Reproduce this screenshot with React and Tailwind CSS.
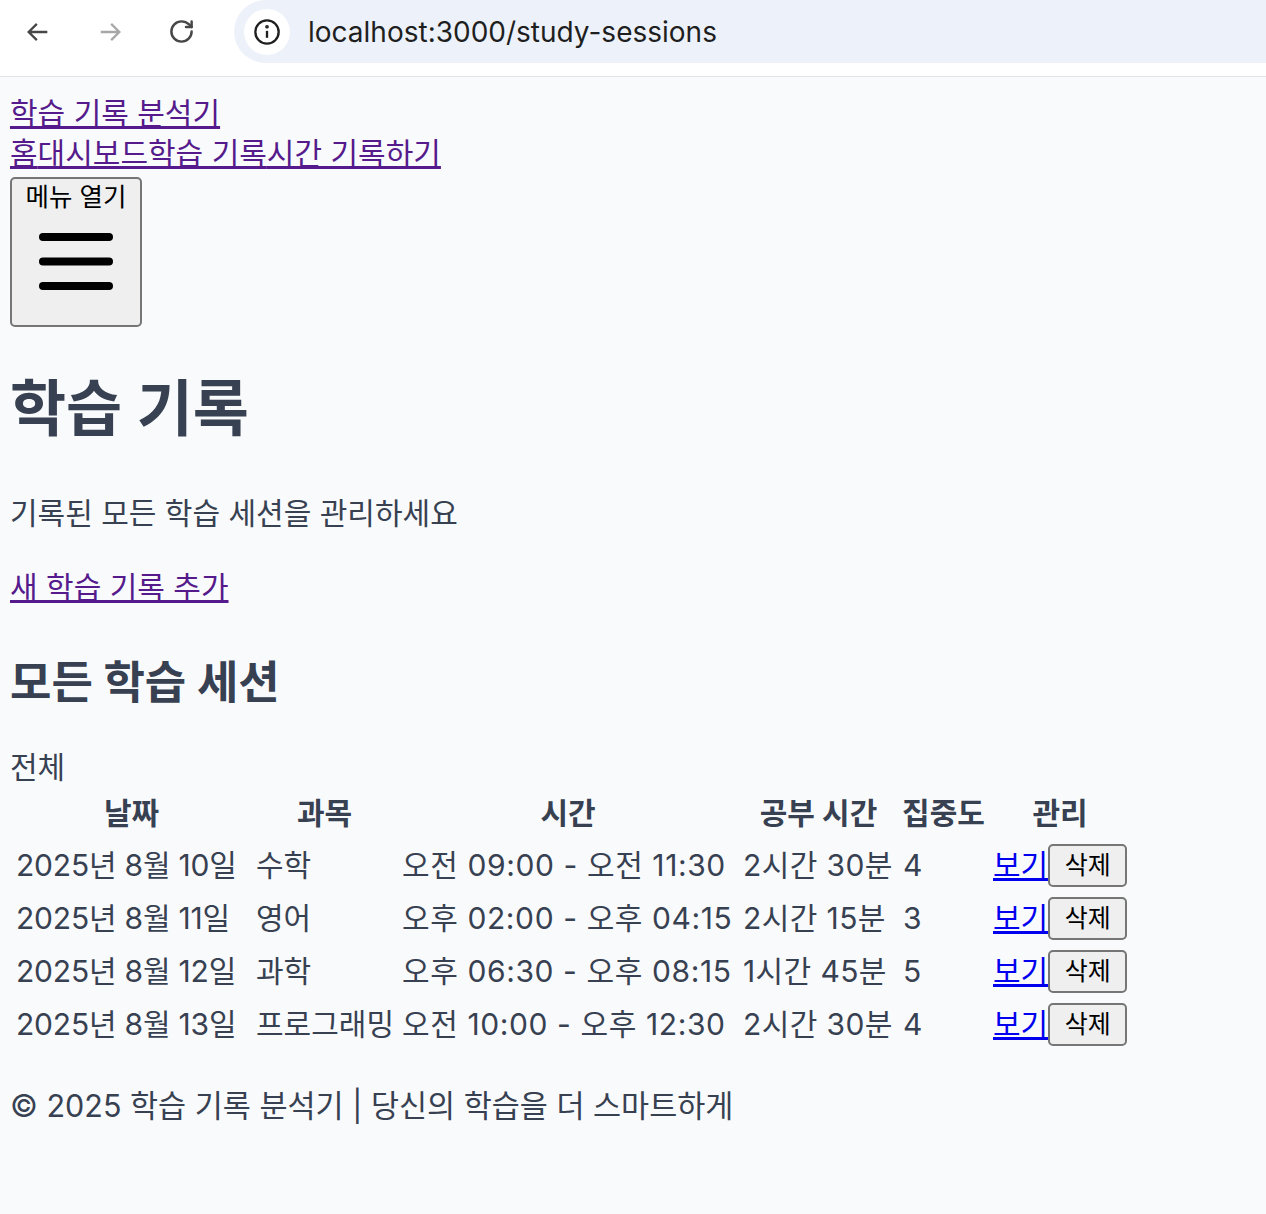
import { RotateCw } from "lucide-react"

const FONT = { fontFamily: '"Inter", "Noto Sans CJK KR", sans-serif' }

const rows = [
  { date: "2025년 8월 10일", subject: "수학", time: "오전 09:00 - 오전 11:30", dur: "2시간 30분", focus: "4" },
  { date: "2025년 8월 11일", subject: "영어", time: "오후 02:00 - 오후 04:15", dur: "2시간 15분", focus: "3" },
  { date: "2025년 8월 12일", subject: "과학", time: "오후 06:30 - 오후 08:15", dur: "1시간 45분", focus: "5" },
  { date: "2025년 8월 13일", subject: "프로그래밍", time: "오전 10:00 - 오후 12:30", dur: "2시간 30분", focus: "4" },
]

function BrowserBar() {
  return (
    <div className="h-[77px] bg-white border-b border-[#e3e3e3] flex items-start">
      <div className="w-[234px] h-[63px] flex items-center">
        {/* back */}
        <svg width="28" height="28" viewBox="0 0 24 24" className="ml-[24px]" fill="none" stroke="#474747" strokeWidth="2">
          <path d="M20 12H5M11 5l-7 7 7 7" />
        </svg>
        {/* forward */}
        <svg width="28" height="28" viewBox="0 0 24 24" className="ml-[44px]" fill="none" stroke="#a8a8a8" strokeWidth="2">
          <path d="M4 12h15M13 5l7 7-7 7" />
        </svg>
        <RotateCw size={27} strokeWidth={2.2} color="#474747" className="ml-[44px]" />
      </div>
      <div className="flex-1 h-[63px] bg-[#edf2fa] rounded-l-[32px] flex items-center">
        <div className="ml-[10px] w-[46px] h-[46px] rounded-full bg-white flex items-center justify-center">
          <svg width="28" height="28" viewBox="0 0 24 24" fill="none" stroke="#1f1f1f" strokeWidth="2">
            <circle cx="12" cy="12" r="10" />
            <path d="M12 11v6" />
            <circle cx="12" cy="7.5" r="0.6" fill="#1f1f1f" />
          </svg>
        </div>
        <span className="ml-[18px] text-[28px] text-[#1f1f1f]" style={FONT}>localhost:3000/study-sessions</span>
      </div>
    </div>
  )
}

export default function App() {
  return (
    <div className="min-h-[1214px] bg-[#f9fafb]" style={FONT}>
      <BrowserBar />
      <div className="pl-[10px] text-[#374151]">
        {/* nav */}
        <div className="pt-[16px] text-[30px] leading-[40px]">
          <div><a href="#" className="underline text-[#551a8b]">학습 기록 분석기</a></div>
          <div className="text-[#551a8b]">
            <a href="#" className="underline">홈</a>
            <a href="#" className="underline">대시보드</a>
            <a href="#" className="underline">학습 기록</a>
            <a href="#" className="underline">시간 기록하기</a>
          </div>
        </div>
        <button className="mt-[4px] w-[132px] h-[150px] bg-[#efefef] border-2 border-[#767676] rounded-[5px] flex flex-col items-center text-black">
          <span className="mt-[2px] text-[25.5px] leading-[32px]">메뉴 열기</span>
          <svg width="74" height="62" viewBox="0 0 74 62" className="mt-[20px]">
            <g stroke="#000" strokeWidth="8" strokeLinecap="round">
              <line x1="4" y1="4" x2="70" y2="4" />
              <line x1="4" y1="28.5" x2="70" y2="28.5" />
              <line x1="4" y1="53" x2="70" y2="53" />
            </g>
          </svg>
        </button>

        <h1 className="mt-[42px] text-[61px] leading-[80px] font-bold">학습 기록</h1>
        <p className="mt-[44px] text-[30px] leading-[40px]">기록된 모든 학습 세션을 관리하세요</p>
        <div className="mt-[34px] text-[30px] leading-[40px]">
          <a href="#" className="underline text-[#551a8b]">새 학습 기록 추가</a>
        </div>

        <h2 className="mt-[48px] text-[45px] leading-[56px] font-bold">모든 학습 세션</h2>
        <div className="mt-[36px] text-[30px] leading-[40px]">전체</div>

        <div className="ml-[6px] grid grid-cols-[231px_137px_332px_151px_81px_134px] gap-x-[9px] text-[30px] whitespace-nowrap">
          {["날짜", "과목", "시간", "공부 시간", "집중도", "관리"].map((h) => (
            <div key={h} className="h-[52px] flex items-center justify-center font-bold">{h}</div>
          ))}
          {rows.map((r) => (
            <div key={r.date} className="contents">
              <div className="h-[53px] flex items-center tracking-[-0.2px]">{r.date}</div>
              <div className="h-[53px] flex items-center">{r.subject}</div>
              <div className="h-[53px] flex items-center tracking-[0.6px]">{r.time}</div>
              <div className="h-[53px] flex items-center tracking-[0.4px]">{r.dur}</div>
              <div className="h-[53px] flex items-center">{r.focus}</div>
              <div className="h-[53px] flex items-center">
                <a href="#" className="shrink-0 underline text-[#0000ee]">보기</a>
                <button className="shrink-0 w-[79px] h-[43px] bg-[#efefef] border-2 border-[#767676] rounded-[5px] text-black text-[25px]">삭제</button>
              </div>
            </div>
          ))}
        </div>

        <div className="mt-[35px] text-[30.5px] leading-[40px]">© 2025 학습 기록 분석기 | 당신의 학습을 더 스마트하게</div>
      </div>
    </div>
  )
}
